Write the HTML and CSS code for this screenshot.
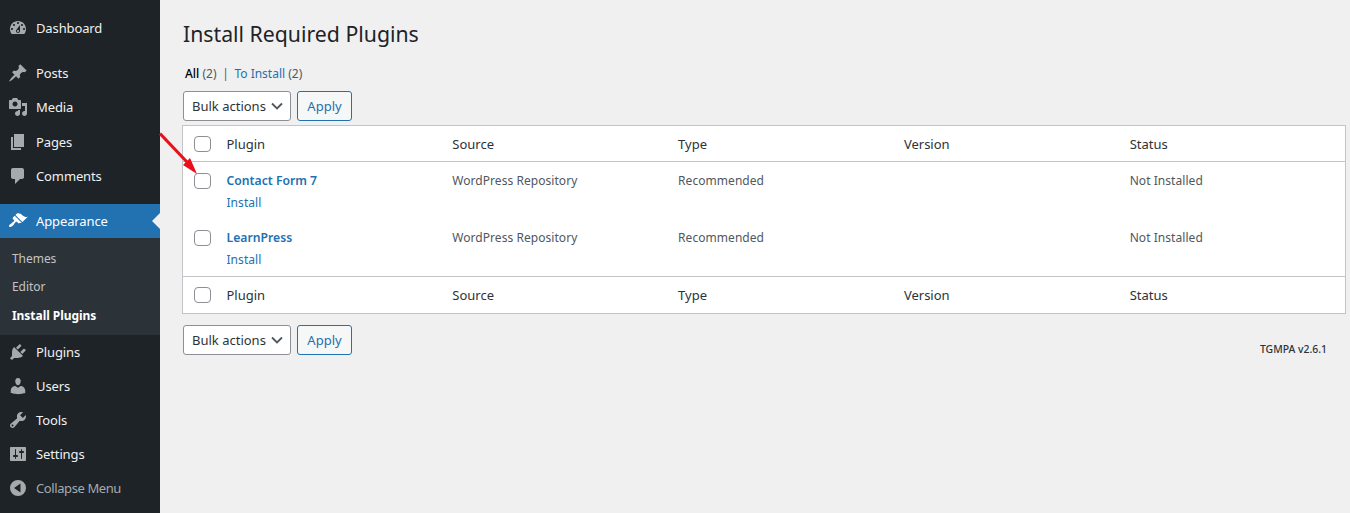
FILE: index.html
```html
<!DOCTYPE html>
<html lang="en">
<head>
<meta charset="utf-8">
<title>Install Required Plugins</title>
<link rel="stylesheet" href="styles.css">
</head>
<body>
<div class="layout">
  <nav class="sidebar">
    <a class="item gap-after"><svg class="ic" viewBox="0 0 20 20"><path d="M3.76 16h12.48c1.1-1.37 1.76-3.11 1.76-5 0-4.42-3.58-8-8-8s-8 3.58-8 8c0 1.89.66 3.63 1.76 5zM10 4c.55 0 1 .45 1 1s-.45 1-1 1-1-.45-1-1 .45-1 1-1zM6 6c.55 0 1 .45 1 1s-.45 1-1 1-1-.45-1-1 .45-1 1-1zm8 0c.55 0 1 .45 1 1s-.45 1-1 1-1-.45-1-1 .45-1 1-1zm-5.37 5.55L12 7v6c0 1.1-.9 2-2 2s-2-.9-2-2c0-.57.24-1.08.63-1.45zM4 10c.55 0 1 .45 1 1s-.45 1-1 1-1-.45-1-1 .45-1 1-1zm12 0c.55 0 1 .45 1 1s-.45 1-1 1-1-.45-1-1 .45-1 1-1zm-5 3c0-.55-.45-1-1-1s-1 .45-1 1 .45 1 1 1 1-.45 1-1z"/></svg><span>Dashboard</span></a>
    <a class="item"><svg class="ic" viewBox="0 0 20 20"><path d="M10.44 3.02l1.82-1.82 6.36 6.35-1.83 1.82c-1.05-.68-2.48-.57-3.41.36l-.75.75c-.92.93-1.04 2.35-.35 3.41l-1.83 1.82-2.41-2.41-2.8 2.79c-.42.42-3.38 2.71-3.8 2.29s1.86-3.39 2.28-3.81l2.79-2.79L4.1 9.36l1.83-1.82c1.05.69 2.48.57 3.4-.36l.75-.75c.93-.92 1.05-2.35.36-3.41z"/></svg><span>Posts</span></a>
    <a class="item"><svg class="ic" viewBox="0 0 20 20"><path d="M13 11V4c0-.55-.45-1-1-1h-1.67L9 1H5L3.67 3H2c-.55 0-1 .45-1 1v7c0 .55.45 1 1 1h10c.55 0 1-.45 1-1zM7 4.5c1.38 0 2.5 1.12 2.5 2.5S8.38 9.5 7 9.5 4.5 8.38 4.5 7 5.62 4.5 7 4.5zM14 6h5v10.5c0 1.38-1.12 2.5-2.5 2.5S14 17.88 14 16.5s1.12-2.5 2.5-2.5c.17 0 .34.02.5.05V9h-3V6zm-4 8.05V13h2v3.5c0 1.38-1.12 2.5-2.5 2.5S7 17.88 7 16.5 8.12 14 9.5 14c.17 0 .34.02.5.05z"/></svg><span>Media</span></a>
    <a class="item after-media"><svg class="ic" viewBox="0 0 20 20"><path d="M6 15V2h10v13H6zm-1 1h8v2H3V5h2v11z"/></svg><span>Pages</span></a>
    <a class="item gap-after"><svg class="ic" viewBox="0 0 20 20"><path d="M5 2h9c1.1 0 2 .9 2 2v7c0 1.1-.9 2-2 2h-2l-5 5v-5H5c-1.1 0-2-.9-2-2V4c0-1.1.9-2 2-2z"/></svg><span>Comments</span></a>
    <a class="item current"><svg class="ic" viewBox="0 0 20 20"><path d="M14.48 11.06L7.41 3.99l1.5-1.5c.5-.56 2.3-.47 3.51.32 1.21.8 1.43 1.28 2.91 2.1 1.18.64 2.45 1.26 4.45.85zm-.71.71L6.7 4.7 4.93 6.47c-.39.39-.39 1.02 0 1.41l1.06 1.06c.39.39.39 1.03 0 1.42-.6.6-1.43 1.11-2.21 1.69-.35.26-.7.53-1.01.84C1.43 13.23.4 14.84 1.33 15.8c.87.86 2.46-.16 3.83-1.53.3-.3.56-.65.82-1 .58-.78 1.09-1.61 1.69-2.21.39-.39 1.03-.39 1.42 0l1.06 1.06c.39.39 1.02.39 1.41 0z"/></svg><span>Appearance</span></a>
    <div class="submenu">
      <a class="subitem">Themes</a>
      <a class="subitem">Editor</a>
      <a class="subitem active">Install Plugins</a>
    </div>
    <a class="item"><svg class="ic" viewBox="0 0 20 20"><path d="M13.11 4.36L9.87 7.6 8 5.73l3.24-3.24c.35-.34 1.05-.2 1.56.32.52.51.66 1.21.31 1.55zm-8 1.77l.91-1.12 9.01 9.01-1.19.84c-.71.71-2.63 1.16-3.82 1.16H6.14L4.9 17.26c-.59.59-1.54.59-2.12 0-.59-.58-.59-1.53 0-2.12l1.24-1.24v-3.88c0-1.13.4-3.19 1.09-3.89zm7.26 3.97l3.24-3.24c.34-.35 1.04-.21 1.55.31.52.51.66 1.21.31 1.55l-3.24 3.25z"/></svg><span>Plugins</span></a>
    <a class="item"><svg class="ic" viewBox="0 0 20 20"><path d="M10 9.25c-2.27 0-2.73-3.44-2.73-3.44C7 4.02 7.82 2 9.97 2c2.16 0 2.98 2.02 2.71 3.81 0 0-.41 3.44-2.68 3.44zm0 2.57L12.72 10c2.39 0 4.52 2.33 4.52 4.53v2.49s-3.65 1.13-7.24 1.13c-3.65 0-7.24-1.13-7.24-1.13v-2.49c0-2.25 1.94-4.48 4.47-4.48z"/></svg><span>Users</span></a>
    <a class="item"><svg class="ic" viewBox="0 0 20 20"><path d="M16.68 9.77c-1.34 1.34-3.3 1.67-4.95.99l-5.41 6.52c-.99.99-2.59.99-3.58 0s-.99-2.59 0-3.57l6.52-5.42c-.68-1.65-.35-3.61.99-4.95 1.28-1.28 3.12-1.62 4.72-1.06l-2.89 2.89 2.82 2.82 2.86-2.87c.53 1.58.18 3.39-1.08 4.65zM3.81 16.21c.4.39 1.04.39 1.43 0 .4-.4.4-1.04 0-1.43-.39-.4-1.03-.4-1.43 0-.39.39-.39 1.03 0 1.43z"/></svg><span>Tools</span></a>
    <a class="item"><svg class="ic" viewBox="0 0 20 20"><path d="M18 16V4c0-.55-.45-1-1-1H3c-.55 0-1 .45-1 1v12c0 .55.45 1 1 1h14c.55 0 1-.45 1-1zM8 11h1c.55 0 1 .45 1 1s-.45 1-1 1H8v1.5c0 .28-.22.5-.5.5s-.5-.22-.5-.5V13H6c-.55 0-1-.45-1-1s.45-1 1-1h1V5.5c0-.28.22-.5.5-.5s.5.22.5.5V11zm5-2h-1c-.55 0-1-.45-1-1s.45-1 1-1h1V5.5c0-.28.22-.5.5-.5s.5.22.5.5V7h1c.55 0 1 .45 1 1s-.45 1-1 1h-1v5.5c0 .28-.22.5-.5.5s-.5-.22-.5-.5V9z"/></svg><span>Settings</span></a>
    <a class="item collapse"><svg class="ic" viewBox="0 0 20 20"><path fill-rule="evenodd" d="M10 2a8 8 0 1 0 0 16a8 8 0 0 0 0-16zM12.5 5.5v9L6 10z"/></svg><span>Collapse Menu</span></a>
  </nav>
  <main class="content">
    <h1 class="title">Install Required Plugins</h1>
    <div class="filters"><b class="f-current">All</b> <span class="count">(2)</span> <span class="sep">|</span> <a class="link">To Install</a> <span class="count">(2)</span></div>
    <div class="actions">
      <div class="select">Bulk actions<svg class="chev" viewBox="0 0 12 12"><path d="M1 3.5L6 8.5L11 3.5"/></svg></div>
      <button class="apply">Apply</button>
    </div>
    <table class="plugins">
      <thead>
        <tr><td class="cb"><span class="check"></span></td><th>Plugin</th><th>Source</th><th>Type</th><th>Version</th><th>Status</th></tr>
      </thead>
      <tbody>
        <tr><td class="cb"><span class="check"></span></td><td><a class="name">Contact Form 7</a><a class="link row-action">Install</a></td><td>WordPress Repository</td><td>Recommended</td><td></td><td>Not Installed</td></tr>
        <tr><td class="cb"><span class="check"></span></td><td><a class="name">LearnPress</a><a class="link row-action">Install</a></td><td>WordPress Repository</td><td>Recommended</td><td></td><td>Not Installed</td></tr>
      </tbody>
      <tfoot>
        <tr><td class="cb"><span class="check"></span></td><th>Plugin</th><th>Source</th><th>Type</th><th>Version</th><th>Status</th></tr>
      </tfoot>
    </table>
    <div class="bottom">
      <div class="actions">
        <div class="select">Bulk actions<svg class="chev" viewBox="0 0 12 12"><path d="M1 3.5L6 8.5L11 3.5"/></svg></div>
        <button class="apply">Apply</button>
      </div>
      <div class="version">TGMPA v2.6.1</div>
    </div>
  </main>
</div>
<svg class="arrow" viewBox="0 0 40 50" width="40" height="50"><path d="M1 2.5L28 31" stroke="#e8101a" stroke-width="3" fill="none"/><path d="M38 43L24 34L31 27z" fill="#e8101a"/></svg>
</body>
</html>
```
FILE: styles.css
```css
* { box-sizing: border-box; }
html, body { margin: 0; height: 100%; }
body {
  background: #f0f0f1;
  font-family: "Noto Sans", "Open Sans", sans-serif;
  font-size: 13px;
  color: #3c434a;
  overflow: hidden;
}
.layout { display: flex; height: 513px; }

.sidebar {
  width: 160px;
  flex: none;
  background: #1d2327;
  padding-top: 11px;
  display: flex;
  flex-direction: column;
}
.item {
  height: 34px;
  flex: none;
  display: flex;
  align-items: center;
  gap: 8px;
  padding-left: 8px;
  color: #f0f0f1;
  font-size: 13px;
  letter-spacing: -0.12px;
  position: relative;
}
.after-media { margin-top: 1px; }
.ic { width: 20px; height: 20px; fill: #a7aaad; flex: none; }
.gap-after { margin-bottom: 11px; }
.current { background: #2271b1; color: #fff; }
.current .ic { fill: #fff; }
.current::after {
  content: "";
  position: absolute;
  right: 0;
  top: 9px;
  border: 8px solid transparent;
  border-right-color: #f0f0f1;
  border-left-width: 0;
}
.collapse { color: #a7aaad; letter-spacing: -0.4px; }
.submenu {
  background: #2c3338;
  padding: 6px 0 5.5px;
  display: flex;
  flex-direction: column;
}
.subitem {
  height: 28.5px;
  display: flex;
  align-items: center;
  padding-left: 12px;
  font-size: 12px;
  color: #c3c4c7;
  letter-spacing: -0.05px;
}
.subitem.active { color: #fff; font-weight: 700; }

.content { flex: 1; padding: 0 4px 0 22px; min-width: 0; }
.title {
  margin: 0;
  padding: 18px 0 0 1px;
  height: 62px;
  font-size: 21.25px;
  line-height: 32px;
  font-weight: 400;
  color: #1d2327;
}
.filters { height: 29px; padding-left: 3px; line-height: 24px; font-size: 12px; color: #50575e; }
.f-current { color: #000; font-weight: 500; }
.sep { color: #50575e; padding: 0 2.5px; }
.link { color: #2271b1; }

.actions { display: flex; gap: 6px; height: 30px; margin-left: 1px; }
.select {
  width: 108px;
  height: 30px;
  border: 1px solid #8c8f94;
  border-radius: 3px;
  background: #fff;
  color: #2c3338;
  display: flex;
  align-items: center;
  justify-content: space-between;
  padding: 0 7px 0 8px;
}
.chev { width: 12px; height: 12px; fill: none; stroke: #50575e; stroke-width: 1.8; }
.apply {
  width: 55px;
  height: 30px;
  border: 1px solid #2271b1;
  border-radius: 3px;
  background: #f6f7f7;
  color: #2271b1;
  font: inherit;
  padding: 0;
}

.plugins {
  width: 1164px;
  margin-top: 4px;
  table-layout: fixed;
  border-collapse: collapse;
  border: 1px solid #c3c4c7;
  background: #fff;
}
.plugins th, .plugins td { padding: 0 10px; text-align: left; vertical-align: top; font-weight: 400; }
.plugins thead tr { height: 36px; }
.plugins tfoot tr { height: 37px; }
.plugins thead th, .plugins tfoot th { vertical-align: middle; color: #2c3338; }
.plugins thead { border-bottom: 1px solid #c3c4c7; }
.plugins tfoot { border-top: 1px solid #c3c4c7; }
.plugins tbody tr { height: 57.5px; }
.plugins tbody td { padding-top: 10px; line-height: 18px; font-size: 12px; letter-spacing: 0.05px; color: #50575e; }
.plugins td.cb { width: 34px; padding: 0 0 0 11px; vertical-align: middle; }
.plugins tbody td.cb { padding-top: 11px; vertical-align: top; }
.check {
  display: block;
  width: 17px;
  height: 16px;
  border: 1px solid #8c8f94;
  border-radius: 4px;
  background: #fff;
}
.name { display: block; color: #2271b1; font-weight: 600; font-size: 12.2px; letter-spacing: 0; }
.row-action { display: block; margin-top: 4px; }

.bottom { display: flex; justify-content: space-between; margin-top: 11px; }
.version { font-size: 10.4px; font-weight: 500; color: #2c3338; padding: 16px 19px 0 0; line-height: 16px; }

.arrow { position: absolute; left: 159px; top: 131px; }
```
